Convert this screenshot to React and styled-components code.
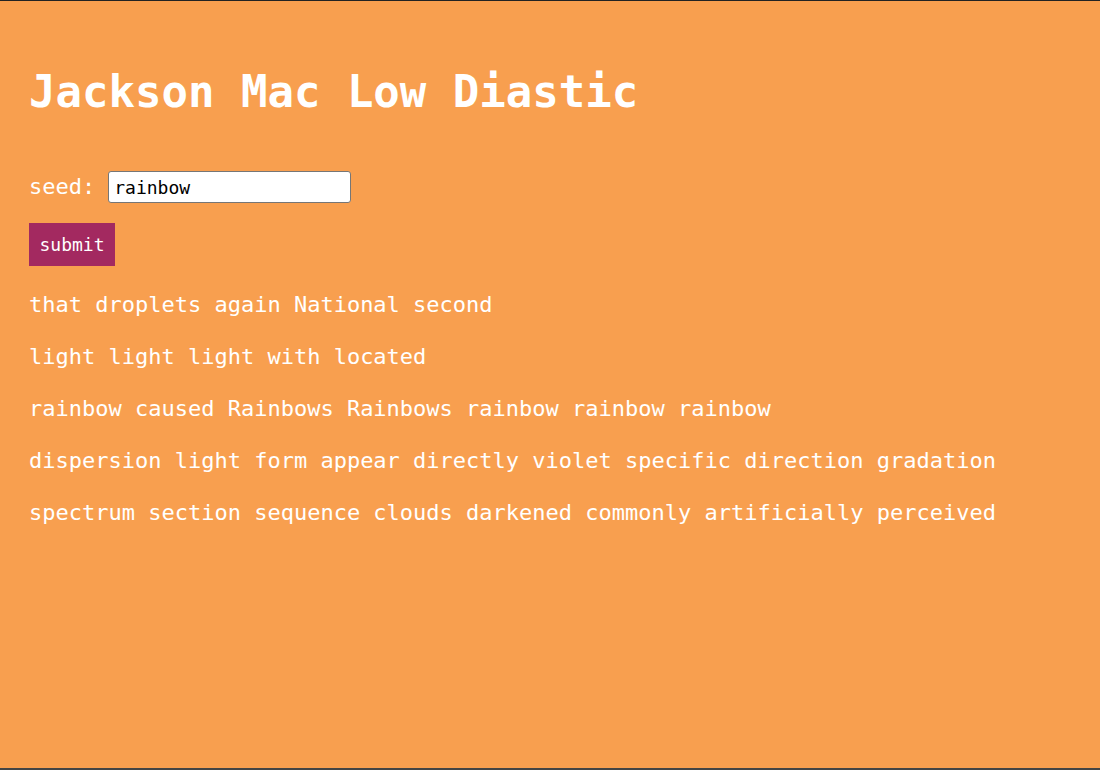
import React, { useState } from 'react';
import styled, { createGlobalStyle } from 'styled-components';

const GlobalStyle = createGlobalStyle`
  *, *::before, *::after {
    box-sizing: border-box;
  }
  body {
    margin: 0;
    background: #f89f4f;
    color: #fff;
    font: 22px/28px Consolas, "DejaVu Sans Mono", monospace;
  }
`;

const Page = styled.main`
  min-height: 100vh;
  padding: 63px 29px 29px;
  border-top: 1px solid #222;
  border-bottom: 2px solid #444;
`;

const Title = styled.h1`
  margin: 0 0 51px;
  font-size: 44px;
  line-height: 56px;
`;

const SeedForm = styled.form`
  display: flex;
  flex-direction: column;
  align-items: flex-start;
  gap: 20px;
`;

const Field = styled.div`
  display: flex;
  align-items: center;
  gap: 13px;
`;

const SeedInput = styled.input`
  width: 243px;
  height: 32px;
  padding: 0 5px;
  border: 1px solid #767676;
  border-radius: 3px;
  background: #fff;
  color: #000;
  font: inherit;
  font-size: 18px;
`;

const SubmitButton = styled.button`
  min-width: 86px;
  padding: 10px;
  border: 0;
  background: #a32960;
  color: #fff;
  font: inherit;
  font-size: 18px;
  line-height: 23px;
  cursor: pointer;
`;

const Poem = styled.section`
  display: flex;
  flex-direction: column;
  gap: 24px;
  margin-top: 25px;
`;

const Line = styled.p`
  margin: 0;
`;

const lines = [
  'that droplets again National second',
  'light light light with located',
  'rainbow caused Rainbows Rainbows rainbow rainbow rainbow',
  'dispersion light form appear directly violet specific direction gradation',
  'spectrum section sequence clouds darkened commonly artificially perceived',
];

export default function App() {
  const [seed, setSeed] = useState('rainbow');

  return (
    <>
      <GlobalStyle />
      <Page>
        <Title>Jackson Mac Low Diastic</Title>
        <SeedForm onSubmit={(event) => event.preventDefault()}>
          <Field>
            <label htmlFor="seed">seed:</label>
            <SeedInput
              id="seed"
              type="text"
              value={seed}
              onChange={(event) => setSeed(event.target.value)}
            />
          </Field>
          <SubmitButton type="submit">submit</SubmitButton>
        </SeedForm>
        <Poem>
          {lines.map((line) => (
            <Line key={line}>{line}</Line>
          ))}
        </Poem>
      </Page>
    </>
  );
}
